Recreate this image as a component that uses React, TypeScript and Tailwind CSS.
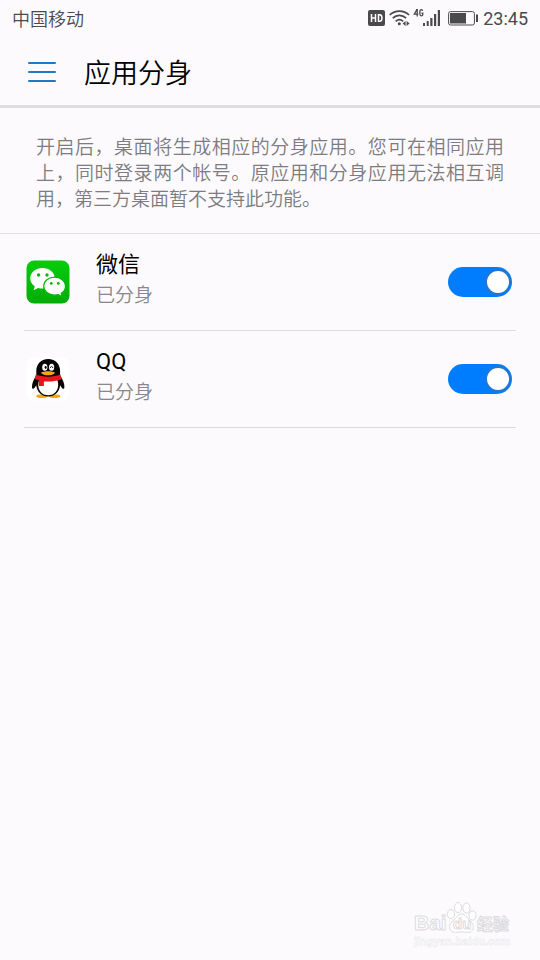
import { useState } from "react";

type CloneApp = {
  id: string;
  name: string;
  Icon: () => React.JSX.Element;
};

function WeChatIcon() {
  return (
    <svg viewBox="0 0 44 44" className="size-11 shrink-0" aria-hidden="true">
      <defs>
        <linearGradient id="wechat-green" x1="0" y1="0" x2="0" y2="1">
          <stop offset="0" stopColor="#05cd0b" />
          <stop offset="1" stopColor="#04ac08" />
        </linearGradient>
      </defs>
      <rect x="0.5" y="0.5" width="43" height="43" rx="7.5" fill="url(#wechat-green)" />
      <path
        d="M16.500 8C9.600 8 4.200 12.600 4.200 18.300c0 3.300 1.800 6.200 4.600 8.100L7.600 30.300l4.500-2.300c1.400.4 2.900.6 4.400.6 6.900 0 12.300-4.600 12.300-10.300S23.400 8 16.500 8z"
        fill="#fff"
      />
      <path
        d="M28.600 17.200c-6 0-10.900 4-10.900 9s4.900 9 10.900 9c1.300 0 2.600-.2 3.800-.5l3.900 2-1.100-3.400c2.600-1.600 4.300-4.200 4.300-7.100 0-5-4.900-9-10.900-9z"
        fill="#fff"
        stroke="#05b70a"
        strokeWidth="1.2"
      />
      <circle cx="12.600" cy="15" r="1.700" fill="#06b90b" />
      <circle cx="21" cy="15" r="1.700" fill="#06b90b" />
      <circle cx="25.300" cy="23.400" r="1.400" fill="#06b90b" />
      <circle cx="32.300" cy="23.400" r="1.400" fill="#06b90b" />
    </svg>
  );
}

function QQIcon() {
  return (
    <svg viewBox="0 0 44 44" className="size-11 shrink-0" aria-hidden="true">
      <rect x="0.5" y="0.5" width="43" height="43" rx="7.5" fill="#fff" />
      <ellipse cx="16" cy="39.200" rx="5.800" ry="1.900" fill="#f5a414" />
      <ellipse cx="28.600" cy="39.200" rx="5.800" ry="1.900" fill="#f5a414" />
      <path
        d="M22.200 2C14.800 2 10.300 7.500 10.300 14v4.500C7.500 22.600 5.900 26.600 6 30c.1 1.800.9 2.300 1.800 1.500.9-.7 1.700-2 2.400-3.300C11.200 35.500 15.900 39.400 22.200 39.400S33.200 35.500 34.200 28.200c.7 1.300 1.500 2.600 2.400 3.300.9.8 1.700.3 1.800-1.500.1-3.400-1.500-7.400-4.300-11.500V14C34.100 7.500 29.600 2 22.200 2z"
        fill="#050505"
      />
      <path d="M13.500 22h17.500c1.200 3 1.400 5.500 1 7.800-.9 5.400-4.600 8.500-9.800 8.500s-8.900-3.100-9.800-8.500c-.4-2.300-.1-4.800 1.100-7.800z" fill="#fff" />
      <path d="M9.800 17.600c7.500 2.800 17 2.800 24.500 0l1.400 4.600c-5.400 2.200-12.500 2.700-17.800 2.200v4.500h-5v-5.600l-4.400-1.300z" fill="#e3171d" />
      <ellipse cx="18.800" cy="10.200" rx="2.600" ry="3.500" fill="#fff" />
      <ellipse cx="25.600" cy="10.200" rx="2.600" ry="3.500" fill="#fff" />
      <ellipse cx="19.600" cy="10.300" rx="1" ry="1.600" fill="#050505" />
      <path d="M24.400 11c.1-2 2.200-2 2.400 0" fill="none" stroke="#050505" strokeWidth="1" />
      <path d="M14.900 15.700c3.300-2 10.900-2 14.200 0-1.600 1.800-4.200 2.600-7.100 2.600s-5.500-.8-7.100-2.600z" fill="#f7a416" />
    </svg>
  );
}

const apps: CloneApp[] = [
  { id: "wechat", name: "微信", Icon: WeChatIcon },
  { id: "qq", name: "QQ", Icon: QQIcon },
];

function StatusIcons() {
  return (
    <svg viewBox="0 0 112 20" className="h-5 w-28" fill="#4a4a4c" aria-hidden="true">
      <rect x="0" y="2" width="17" height="16" rx="2" />
      <path d="M3.500 6v8M7.500 6v8M3.500 10h4M10.500 6.700v6.600h1.200c3 0 3-6.600 0-6.600z" fill="none" stroke="#fff" strokeWidth="1.500" />
      <g fill="none" stroke="#4a4a4c" strokeWidth="1.700">
        <path d="M21.700 7c5.500-5.200 13.900-5.200 19.400 0" />
        <path d="M24.700 10.200c3.900-3.700 9.500-3.700 13.400 0" />
        <path d="M27.700 13.300c2.300-2.200 5.100-2.200 7.400 0" />
      </g>
      <circle cx="31.300" cy="15.800" r="1.500" />
      <path d="M37.600 13v5l-3-2.500zM38.600 13v5l3-2.500z" />
      <path d="M49 1.300l-2.700 4.900h4M49.200 1v7.500M54.700 2.800c-.5-1.500-2.800-1.500-2.800.5v3c0 2 2.900 2 2.900.2V5.200h-1.400" fill="none" stroke="#4a4a4c" strokeWidth="1.300" />
      <path d="M55 15h2v3h-2zM58.700 13h2v5h-2zM62.300 10h2.200v8h-2.200zM66 6h2.200v12H66zM69.800 2H72v16h-2.200z" />
      <rect x="80.600" y="3.600" width="25.800" height="13.400" rx="2" fill="none" stroke="#4a4a4c" strokeWidth="1" />
      <path d="M82 5h16v10.600H82zM108 6.500h2v7.500h-2z" />
    </svg>
  );
}

function AppRow({ id, name, Icon }: CloneApp) {
  const [enabled, setEnabled] = useState(true);
  return (
    <li className="flex items-center border-b border-[#dddcdf] pr-1 pl-0.5">
      <Icon />
      <label htmlFor={id} className="ml-[26px] flex-1 pt-[13px] pb-[21px]">
        <span className="block text-[22px] leading-9 font-normal text-black">{name}</span>
        <span className="block text-[19px] leading-[26px] text-[#88878b]">{enabled ? "已分身" : "未开启"}</span>
      </label>
      <input
        id={id}
        type="checkbox"
        role="switch"
        checked={enabled}
        onChange={(e) => setEnabled(e.target.checked)}
        className="flex h-[30px] w-16 shrink-0 cursor-pointer appearance-none items-center justify-start rounded-full bg-[#c4c4c8] px-[3px] before:size-[22px] before:rounded-full before:bg-white before:content-[''] checked:justify-end checked:bg-[#007dff] checked:before:ring-2 checked:before:ring-[#2577cc]"
      />
    </li>
  );
}

function Watermark() {
  return (
    <div className="pointer-events-none absolute right-7 bottom-3 w-[98px]" aria-hidden="true">
      <svg viewBox="0 0 98 48" className="block w-full" fill="#fff" stroke="#dcdbde" strokeWidth="1">
        <text x="0" y="30" fontFamily="Liberation Sans, sans-serif" fontWeight="700" fontSize="21">Bai</text>
        <ellipse cx="37" cy="14" rx="3.500" ry="4.500" />
        <ellipse cx="44" cy="7.500" rx="3.600" ry="5" />
        <ellipse cx="52.500" cy="8" rx="3.600" ry="5" />
        <ellipse cx="58.500" cy="15.500" rx="3.500" ry="4.500" />
        <path d="M47.500 14c-4 0-5.500 4.500-8.500 7-3.500 2.800-4.200 6.200-2.500 9 2.600 4 7 1.800 11 1.800s8.400 2.200 11-1.800c1.700-2.800 1-6.200-2.500-9-3-2.500-4.500-7-8.500-7z" />
        <text x="39" y="29" fontFamily="Liberation Sans, sans-serif" fontWeight="700" fontSize="15">du</text>
        <text x="63" y="30" fontFamily="Noto Sans CJK SC, sans-serif" fontWeight="700" fontSize="16">经验</text>
        <text x="0" y="45" fontFamily="Liberation Sans, sans-serif" fontWeight="700" fontSize="11" stroke="#e8e7ea" strokeWidth="0.5">jingyan.baidu.com</text>
      </svg>
    </div>
  );
}

export default function App() {
  return (
    <div className="relative min-h-screen bg-[#fcfafd] font-['Roboto','Noto_Sans_CJK_SC',sans-serif] font-[350]" lang="zh-CN">
      <div className="flex h-9 items-center justify-between px-3 text-lg text-[#4a4a4c]">
        <span className="pt-1">中国移动</span>
        <div className="flex items-center gap-[3px]">
          <StatusIcons />
          <span className="pt-0.5 font-normal">23:45</span>
        </div>
      </div>

      <header className="flex h-[72px] items-center gap-7 border-b-3 border-[#dedde0] px-7 pt-0.5">
        <button type="button" aria-label="菜单" className="flex w-7 flex-col gap-[7px]">
          <span className="h-0.5 rounded-full bg-[#1f78c4]" />
          <span className="h-0.5 rounded-full bg-[#1f78c4]" />
          <span className="h-0.5 rounded-full bg-[#1f78c4]" />
        </button>
        <h1 className="pt-1.5 text-[27px] font-[350] text-black">应用分身</h1>
      </header>

      <main>
        <p className="border-b border-[#e0dfe2] px-9 pt-[27px] pb-5 text-justify text-[19px] leading-[26px] text-[#7d7c80]">
          开启后，桌面将生成相应的分身应用。您可在相同应用上，同时登录两个帐号。原应用和分身应用无法相互调用，第三方桌面暂不支持此功能。
        </p>
        <ul className="px-6">
          {apps.map((app) => (
            <AppRow key={app.id} {...app} />
          ))}
        </ul>
      </main>

      <Watermark />
    </div>
  );
}
